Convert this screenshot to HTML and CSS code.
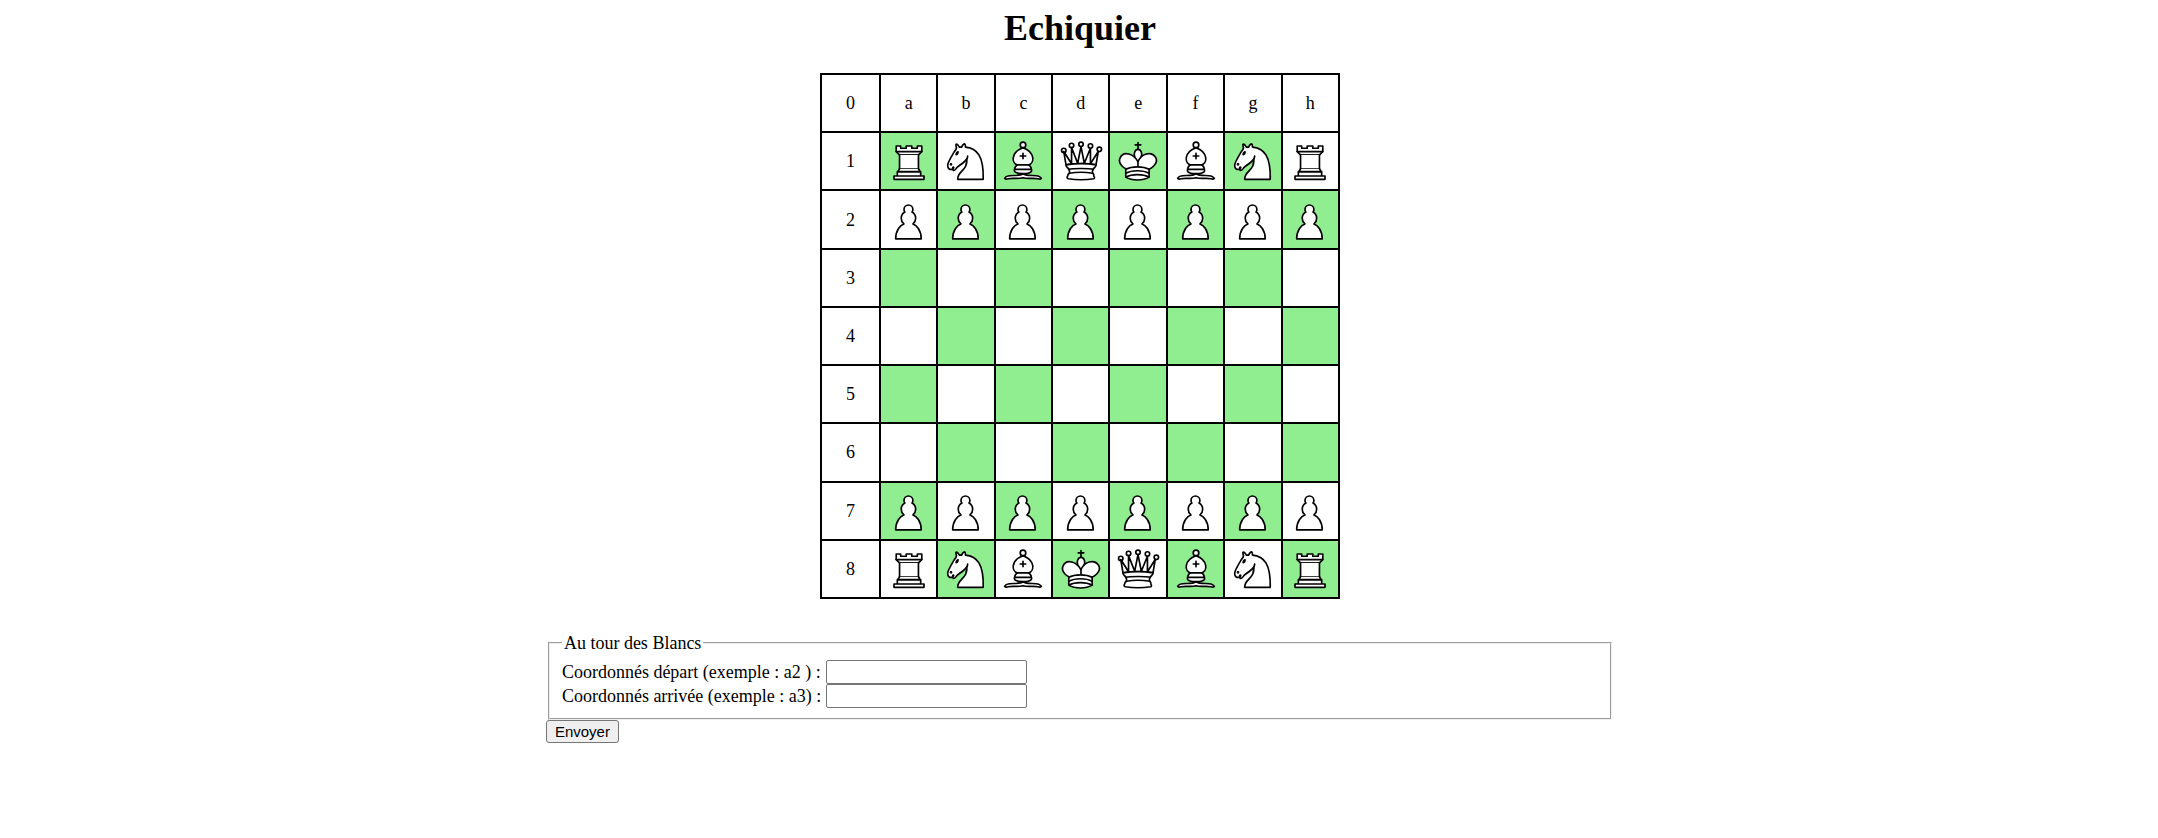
FILE: index.html
```html
<!DOCTYPE html>
<html lang="fr">
<head>
<meta charset="utf-8">
<title>Echiquier</title>
<link rel="stylesheet" href="styles.css">
</head>
<body>
<svg class="sprites" aria-hidden="true">
  <symbol id="pawn" viewBox="0 0 45 45">
    <path d="M22 9c-2.21 0-4 1.79-4 4 0 .89.29 1.71.78 2.38-1.95 1.12-3.28 3.21-3.28 5.62 0 2.03.94 3.84 2.41 5.03-3 1.06-7.41 5.55-7.41 13.47h23c0-7.92-4.41-12.41-7.41-13.47 1.47-1.19 2.41-3 2.41-5.03 0-2.41-1.33-4.5-3.28-5.62.49-.67.78-1.49.78-2.38 0-2.21-1.79-4-4-4z"/>
  </symbol>
  <symbol id="rook" viewBox="0 0 45 45">
    <path stroke-linecap="butt" d="M9 39h27v-3H9v3zM12 36v-4h21v4H12zM11 14V9h4v2h5V9h5v2h5V9h4v5"/>
    <path d="M34 14l-3 3H14l-3-3"/>
    <path stroke-linecap="butt" stroke-linejoin="miter" d="M31 17v12.500H14V17"/>
    <path d="M31 29.500l1.500 2.500h-20l1.500-2.500"/>
    <path fill="none" stroke-linejoin="miter" d="M11 14h23"/>
  </symbol>
  <symbol id="knight" viewBox="0 0 45 45">
    <path d="M22 10c10.500 1 16.500 8 16 29H15c0-9 10-6.500 8-21"/>
    <path d="M24 18c.38 2.910-5.550 7.370-8 9-3 2-2.820 4.340-5 4-1.042-.94 1.410-3.040 0-3-1 0 .19 1.230-1 2-1 0-4.003 1-4-4 0-2 6-12 6-12s1.890-1.900 2-3.500c-.73-.994-.5-2-.5-3 1-1 3 2.500 3 2.500h2s.78-1.992 2.500-3c1 0 1 3 1 3"/>
    <path fill="#000" d="M9.500 25.500a.5.5 0 1 1-1 0 .5.5 0 1 1 1 0zM14.930 15.750a.5 1.500 30 1 1-.866-.5.5 1.500 30 1 1 .866.5z"/>
  </symbol>
  <symbol id="bishop" viewBox="0 0 45 45">
    <g stroke-linecap="butt">
      <path d="M9 36c3.390-.97 10.110.43 13.500-2 3.390 2.430 10.110 1.030 13.500 2 0 0 1.650.54 3 2-.68.97-1.650.99-3 .5-3.390-.97-10.110.46-13.500-1-3.390 1.460-10.110.03-13.500 1-1.354.49-2.323.47-3-.5 1.354-1.940 3-2 3-2z"/>
      <path d="M15 32c2.500 2.500 12.500 2.500 15 0 .5-1.500 0-2 0-2 0-2.500-2.500-4-2.500-4 5.500-1.500 6-11.500-5-15.500-11 4-10.500 14-5 15.500 0 0-2.500 1.500-2.500 4 0 0-.5.5 0 2z"/>
      <path d="M25 8a2.500 2.500 0 1 1-5 0 2.500 2.500 0 1 1 5 0z"/>
    </g>
    <path fill="none" stroke-linejoin="miter" d="M17.500 26h10M15 30h15m-7.500-14.500v5M20 18h5"/>
  </symbol>
  <symbol id="queen" viewBox="0 0 45 45">
    <path d="M9 13a2 2 0 1 1-4 0 2 2 0 1 1 4 0zM24.500 7.500a2 2 0 1 1-4 0 2 2 0 1 1 4 0zM41 12a2 2 0 1 1-4 0 2 2 0 1 1 4 0zM16 8.500a2 2 0 1 1-4 0 2 2 0 1 1 4 0zM33 9a2 2 0 1 1-4 0 2 2 0 1 1 4 0z"/>
    <path stroke-linecap="butt" d="M9 26c8.500-1.500 21-1.500 27 0l2-12-7 11V11l-5.500 13.500-3-15-3 15-5.500-14V25L7 14l2 12z"/>
    <path stroke-linecap="butt" d="M9 26c0 2 1.500 2 2.500 4 1 1.500 1 1 .5 3.500-1.500 1-1.500 2.500-1.500 2.500-1.500 1.500.5 2.500.5 2.500 6.500 1 16.500 1 23 0 0 0 1.500-1 0-2.500 0 0 .5-1.500-1-2.500-.5-2.500-.5-2 .5-3.500 1-2 2.500-2 2.500-4-8.500-1.500-18.500-1.500-27 0z"/>
    <path fill="none" d="M11.500 30c3.500-1 18.500-1 22 0M12 33.500c6-1 15-1 21 0"/>
  </symbol>
  <symbol id="king" viewBox="0 0 45 45">
    <path fill="none" stroke-linejoin="miter" d="M22.500 11.630V6M20 8h5"/>
    <path stroke-linecap="butt" stroke-linejoin="miter" d="M22.500 25s4.500-7.500 3-10.500c0 0-1-2.500-3-2.500s-3 2.500-3 2.500c-1.500 3 3 10.500 3 10.500"/>
    <path d="M11.500 37c5.500 3.500 15.500 3.500 21 0v-7s9-4.500 6-10.500c-4-6.500-13.500-3.500-16 4V27v-3.500c-3.500-7.500-13-10.500-16-4-3 6 5 10 5 10V37z"/>
    <path fill="none" d="M11.500 30c5.500-3 15.500-3 21 0M11.500 33.500c5.500-3 15.500-3 21 0M11.500 37c5.500-3 15.500-3 21 0"/>
  </symbol>
</svg>
<main class="page">
  <h1 class="title">Echiquier</h1>
  <table class="board">
    <tr><td class="rank">0</td><td>a</td><td>b</td><td>c</td><td>d</td><td>e</td><td>f</td><td>g</td><td>h</td></tr>
    <tr><td>1</td>
      <td class="green"><svg class="piece"><use href="#rook"/></svg></td>
      <td><svg class="piece"><use href="#knight"/></svg></td>
      <td class="green"><svg class="piece"><use href="#bishop"/></svg></td>
      <td><svg class="piece"><use href="#queen"/></svg></td>
      <td class="green"><svg class="piece"><use href="#king"/></svg></td>
      <td><svg class="piece"><use href="#bishop"/></svg></td>
      <td class="green"><svg class="piece"><use href="#knight"/></svg></td>
      <td><svg class="piece"><use href="#rook"/></svg></td></tr>
    <tr><td>2</td>
      <td><svg class="piece"><use href="#pawn"/></svg></td>
      <td class="green"><svg class="piece"><use href="#pawn"/></svg></td>
      <td><svg class="piece"><use href="#pawn"/></svg></td>
      <td class="green"><svg class="piece"><use href="#pawn"/></svg></td>
      <td><svg class="piece"><use href="#pawn"/></svg></td>
      <td class="green"><svg class="piece"><use href="#pawn"/></svg></td>
      <td><svg class="piece"><use href="#pawn"/></svg></td>
      <td class="green"><svg class="piece"><use href="#pawn"/></svg></td></tr>
    <tr><td>3</td><td class="green"></td><td></td><td class="green"></td><td></td><td class="green"></td><td></td><td class="green"></td><td></td></tr>
    <tr><td>4</td><td></td><td class="green"></td><td></td><td class="green"></td><td></td><td class="green"></td><td></td><td class="green"></td></tr>
    <tr><td>5</td><td class="green"></td><td></td><td class="green"></td><td></td><td class="green"></td><td></td><td class="green"></td><td></td></tr>
    <tr><td>6</td><td></td><td class="green"></td><td></td><td class="green"></td><td></td><td class="green"></td><td></td><td class="green"></td></tr>
    <tr><td>7</td>
      <td class="green"><svg class="piece"><use href="#pawn"/></svg></td>
      <td><svg class="piece"><use href="#pawn"/></svg></td>
      <td class="green"><svg class="piece"><use href="#pawn"/></svg></td>
      <td><svg class="piece"><use href="#pawn"/></svg></td>
      <td class="green"><svg class="piece"><use href="#pawn"/></svg></td>
      <td><svg class="piece"><use href="#pawn"/></svg></td>
      <td class="green"><svg class="piece"><use href="#pawn"/></svg></td>
      <td><svg class="piece"><use href="#pawn"/></svg></td></tr>
    <tr><td>8</td>
      <td><svg class="piece"><use href="#rook"/></svg></td>
      <td class="green"><svg class="piece"><use href="#knight"/></svg></td>
      <td><svg class="piece"><use href="#bishop"/></svg></td>
      <td class="green"><svg class="piece"><use href="#king"/></svg></td>
      <td><svg class="piece"><use href="#queen"/></svg></td>
      <td class="green"><svg class="piece"><use href="#bishop"/></svg></td>
      <td><svg class="piece"><use href="#knight"/></svg></td>
      <td class="green"><svg class="piece"><use href="#rook"/></svg></td></tr>
  </table>
  <form class="move">
    <fieldset class="turn">
      <legend>Au tour des Blancs</legend>
      <div class="field"><label for="from">Coordonnés départ (exemple : a2 ) :</label><input class="coord" id="from" type="text"></div>
      <div class="field"><label for="to">Coordonnés arrivée (exemple : a3) :</label><input class="coord" id="to" type="text"></div>
    </fieldset>
    <button class="send" type="button">Envoyer</button>
  </form>
</main>
</body>
</html>
```
FILE: styles.css
```css
body {
  margin: 0;
  background: #fff;
  color: #000;
  font: 18px/20px "Liberation Serif", "Times New Roman", serif;
}

.sprites {
  position: absolute;
  width: 0;
  height: 0;
}

.page {
  width: 49.5%;
  margin: 0 auto;
  padding: 8px 0 0 2px;
}

.title {
  margin: 0 0 25px;
  font-size: 36px;
  line-height: 40px;
  text-align: center;
}

.board {
  width: 520px;
  height: 526px;
  margin: 0 auto 34px;
  border-collapse: collapse;
  table-layout: fixed;
}

.board td {
  height: 56px;
  padding: 0;
  border: 2px solid #000;
  text-align: center;
  vertical-align: middle;
}

.board .rank {
  width: 57px;
}

.board .green {
  background: lightgreen;
}

.piece {
  display: block;
  width: 50px;
  height: 50px;
  margin: 0 auto;
  fill: #fff;
  stroke: #000;
  stroke-width: 1.5;
  stroke-linecap: round;
  stroke-linejoin: round;
}

.turn {
  margin: 0 2px;
  padding: 7px 12px 10px;
  border: 2px groove #f0f0f0;
}

.turn legend {
  padding: 0 2px;
}

.field {
  display: flex;
  align-items: center;
  gap: 5px;
}

.coord {
  box-sizing: border-box;
  width: 201px;
  height: 24px;
  padding: 1px 2px;
  border: 1px solid #767676;
  border-radius: 2px;
  font: 15px "Liberation Sans", Arial, sans-serif;
}

.send {
  display: block;
  box-sizing: border-box;
  height: 23px;
  padding: 0 8px;
  border: 1px solid #767676;
  border-radius: 3px;
  background: #efefef;
  color: #000;
  font: 15px "Liberation Sans", Arial, sans-serif;
}
```
